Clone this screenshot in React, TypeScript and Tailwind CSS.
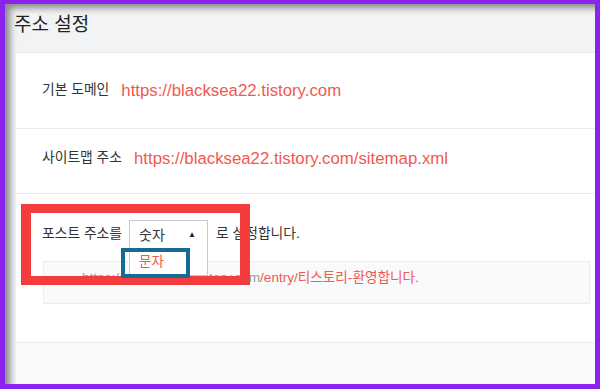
import React from 'react';

const FONT = { fontFamily: '"Liberation Sans", "Noto Sans CJK KR", sans-serif' };

const SettingRow: React.FC<{ label: string; url: string; className?: string }> = ({ label, url, className }) => (
  <div className={`flex items-center border-b border-[#ececee] pl-[26px] ${className ?? ''}`}>
    <span className="text-[13.8px] text-[#333]">{label}</span>
    <span className="ml-[12px] text-[16.8px] text-[#f1594f]">{url}</span>
  </div>
);

const App: React.FC = () => {
  return (
    <div className="relative w-[600px] h-[389px] bg-[#8a23ee] pt-[4px] pl-[5px] pr-[5px] pb-[5px]" style={FONT}>
      <div className="flex h-full flex-col overflow-hidden bg-[#f2f3f5] shadow-[inset_7px_6px_7px_-2px_rgba(0,0,0,0.45)]">
        {/* Header */}
        <div className="h-[48px] shrink-0 pl-[9px] pt-[9px]">
          <h1 className="text-[19px] leading-[24px] text-[#222]">주소 설정</h1>
        </div>

        {/* Card */}
        <div className="ml-[11px] flex flex-1 flex-col">
          <div className="border-t border-[#e6e7ea] bg-white">
            <SettingRow className="h-[76px]" label="기본 도메인" url="https://blacksea22.tistory.com" />
            <SettingRow className="h-[65px] pb-[5px]" label="사이트맵 주소" url="https://blacksea22.tistory.com/sitemap.xml" />

            <div className="h-[149px] border-b border-[#ececee] pt-[26px]">
              <div className="flex items-center pl-[26px]">
                <span className="text-[13.8px] text-[#333]">포스트 주소를</span>
                <div className="relative ml-[7px]">
                  <div className="flex h-[29px] w-[79px] items-center justify-between border-x border-t border-[#c9c9c9] bg-white pl-[9px] pr-[11px]">
                    <span className="text-[14px] text-[#333]">숫자</span>
                    <span className="text-[8px] leading-none text-[#222]">▲</span>
                  </div>
                  <div className="absolute left-0 top-full z-10 flex h-[27px] w-[79px] items-center border-x border-b border-[#c9c9c9] bg-white pl-[9px]">
                    <span className="text-[13.5px] text-[#f1594f]">문자</span>
                  </div>
                </div>
                <span className="ml-[8px] text-[13.8px] text-[#333]">로 설정합니다.</span>
              </div>

              <div className="ml-[27px] mr-[5px] mt-[12px] flex h-[43px] items-start border border-[#ececee] bg-[#f9fafb] pl-[38px] pt-[7px] text-[13.6px] leading-[18px]">
                <span className="text-[#9a9a9a]">https://blacksea22.tistory.com</span>
                <span className="text-[#f1594f]">/entry/티스토리-환영합니다.</span>
              </div>
            </div>
          </div>
          <div className="flex-1 bg-[#f8f9fb]" />
        </div>
      </div>

      {/* Annotation boxes */}
      <div className="pointer-events-none absolute left-[21px] top-[204px] h-[81px] w-[229px] border-x-[10px] border-y-[9px] border-[#f43c3c]" />
      <div className="pointer-events-none absolute left-[121px] top-[248px] z-20 h-[30px] w-[69px] border-[4px] border-[#176a93]" />
    </div>
  );
};

export default App;
